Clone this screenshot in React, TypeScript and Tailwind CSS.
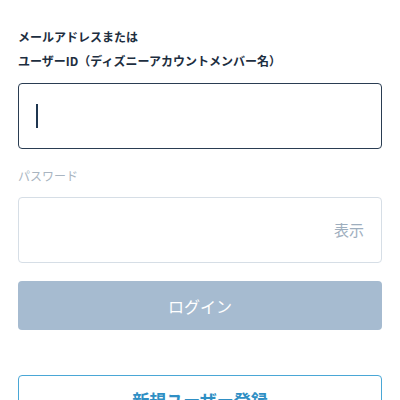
import React from 'react';

const font = { fontFamily: '"Noto Sans CJK JP", "Noto Sans", sans-serif' };

export default function App() {
  return (
    <div className="w-[400px] h-[400px] overflow-hidden bg-white px-[18px]" style={font}>
      <div className="pt-[25px]">
        <p className="text-[12px] leading-[24px] font-bold text-[#1d2e40]">メールアドレスまたは</p>
        <p className="text-[12px] leading-[24px] font-bold text-[#1d2e40]">ユーザーID（ディズニーアカウントメンバー名）</p>
      </div>

      <div className="mt-[10px] h-[66px] rounded-[4px] border-[1.5px] border-[#2a3d52] flex items-center pl-[17px]">
        <span className="block w-[2px] h-[24px] bg-[#1f3650]" />
      </div>

      <p className="mt-[18px] text-[12px] leading-[18px] text-[#a9b5c1]">パスワード</p>

      <div className="mt-[12px] h-[66px] rounded-[4px] border border-[#d6dee6] flex items-center justify-end pr-[17px]">
        <span className="text-[15px] text-[#9eaebe]">表示</span>
      </div>

      <button className="mt-[18px] w-full h-[49px] rounded-[4px] bg-[#a6bbd0] text-white text-[16px] flex items-center justify-center">
        ログイン
      </button>

      <button className="mt-[45px] w-full h-[50px] rounded-[4px] border-[1.5px] border-[#4aa7d6] text-[#2f8fc4] text-[17px] font-bold flex items-center justify-center">
        新規ユーザー登録
      </button>
    </div>
  );
}
